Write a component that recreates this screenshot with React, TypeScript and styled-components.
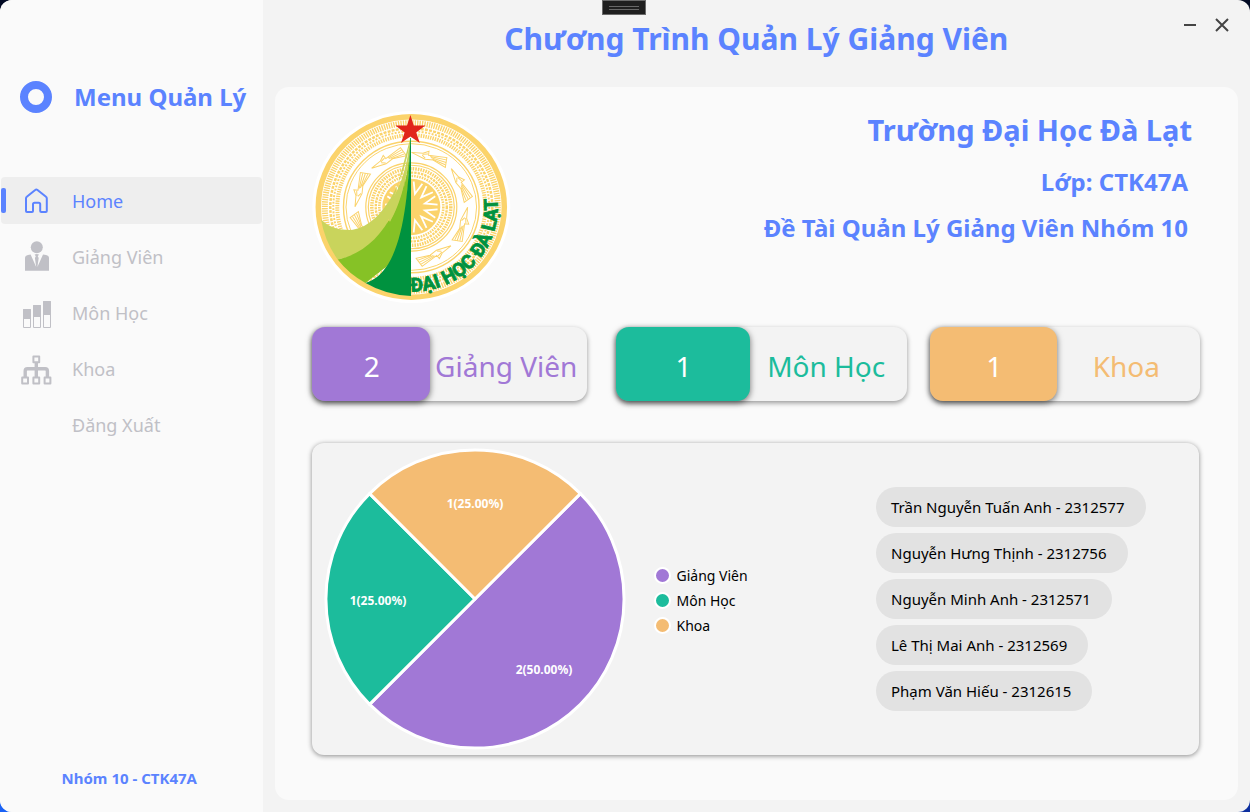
import React from "react";
import styled, { createGlobalStyle } from "styled-components";

const BLUE = "#5b83ff";
const PURPLE = "#a178d6";
const TEAL = "#1cbc9c";
const ORANGE = "#f4bc73";

const GlobalStyle = createGlobalStyle`
  * { box-sizing: border-box; }
  body {
    margin: 0;
    background:
      linear-gradient(to bottom, #020b24 50%, transparent 90%),
      linear-gradient(to right, #1a62f5, #0c2f9f);
    font-family: "Noto Sans", "Open Sans", sans-serif;
  }
  h1, h2, h3, p, ul { margin: 0; padding: 0; }
  ul { list-style: none; }
`;

const Window = styled.div`
  display: grid;
  grid-template-columns: 21% minmax(0, 1fr);
  min-height: 100vh;
  overflow: hidden;
  border-radius: 12px;
  background: #f3f3f3;
`;

const Sidebar = styled.aside`
  display: flex;
  flex-direction: column;
  background: #fafafa;
`;

const Brand = styled.div`
  display: flex;
  align-items: center;
  gap: 22px;
  height: 177px;
  padding: 17px 0 0 20px;
  color: ${BLUE};
`;

const Ring = styled.span`
  width: 32px;
  height: 32px;
  border: 8px solid ${BLUE};
  border-radius: 50%;
`;

const BrandName = styled.h2`
  font-size: 24px;
  line-height: 32px;
  font-weight: 700;
  white-space: nowrap;
`;

const Nav = styled.nav`
  display: flex;
  flex-direction: column;
  gap: 9px;
  padding: 0 1px;
`;

const NavLink = styled.a<{ $active?: boolean }>`
  position: relative;
  display: flex;
  align-items: center;
  gap: 20px;
  height: 47px;
  padding-left: 19px;
  border-radius: 4px;
  font-size: 18px;
  line-height: 24px;
  text-decoration: none;
  color: ${(p) => (p.$active ? BLUE : "#c0c0c6")};
  background: ${(p) => (p.$active ? "#eeeeee" : "transparent")};
`;

const ActiveMark = styled.span`
  position: absolute;
  left: 0;
  top: 11px;
  width: 5px;
  height: 25px;
  border-radius: 2px;
  background: ${BLUE};
`;

const NavIcon = styled.svg`
  width: 32px;
  height: 32px;
  flex: none;
`;

const Credit = styled.p`
  margin-top: auto;
  padding: 0 4px 23px 0;
  text-align: center;
  font-size: 15px;
  line-height: 22px;
  font-weight: 700;
  color: ${BLUE};
`;

const Main = styled.main`
  position: relative;
  display: flex;
  flex-direction: column;
  padding: 0 12px 12px;
`;

const TitleBar = styled.header`
  height: 87px;
  padding-top: 19px;
  text-align: center;
`;

const Title = styled.h1`
  font-size: 30px;
  line-height: 40px;
  color: ${BLUE};
`;

const Controls = styled.div`
  position: absolute;
  top: 15px;
  right: 18px;
  display: flex;
  gap: 12px;
`;

const ControlButton = styled.button`
  width: 20px;
  height: 20px;
  padding: 0;
  border: 0;
  background: none;
  color: #444;
  svg { display: block; }
`;

const DebugHandle = styled.div`
  position: fixed;
  top: 0;
  left: 50%;
  width: 44px;
  height: 15px;
  margin-left: -23px;
  padding: 5px 6px;
  border: 1px solid #6a6a6a;
  background: #1f1f1f;
  span {
    display: block;
    height: 4px;
    border: solid #686868;
    border-width: 1px 0;
  }
`;

const Panel = styled.section`
  flex: 1;
  padding: 21px 38px 45px 37px;
  border-radius: 14px;
  background: #fafafa;
`;

const Intro = styled.div`
  display: flex;
  justify-content: space-between;
  height: 219px;
`;

const Headings = styled.div`
  display: flex;
  flex-direction: column;
  align-items: flex-end;
  gap: 6px;
  padding: 2px 8px 0 0;
  color: ${BLUE};
`;

const School = styled.h2`
  margin-bottom: 6px;
  font-size: 29px;
  line-height: 40px;
`;

const Subject = styled.h3`
  padding-right: 4px;
  font-size: 24px;
  line-height: 40px;
`;

const Stats = styled.div`
  display: flex;
`;

const StatCard = styled.article<{ $share: number; $gutter: number }>`
  display: flex;
  flex: ${(p) => p.$share} 1 0;
  height: 74px;
  margin-right: ${(p) => p.$gutter}px;
  border-radius: 13px;
  background: #f3f3f3;
  box-shadow: 0 2px 5px rgba(0, 0, 0, 0.4);
  font-size: 28px;
  line-height: 40px;
`;

const StatValue = styled.strong<{ $color: string; $width: number }>`
  display: grid;
  place-items: center;
  flex: 0 0 ${(p) => p.$width}%;
  padding: 4px 0 0 2px;
  border-radius: 13px;
  background: ${(p) => p.$color};
  box-shadow: 0 2px 6px rgba(0, 0, 0, 0.55);
  color: #fff;
  font-weight: 400;
`;

const StatName = styled.span<{ $color: string }>`
  display: grid;
  place-items: center;
  flex: 1;
  padding: 4px 4px 0 0;
  white-space: nowrap;
  color: ${(p) => p.$color};
`;

const ChartCard = styled.section`
  display: flex;
  align-items: center;
  min-height: 312px;
  margin: 42px 1px 0 0;
  padding-left: 12px;
  border-radius: 12px;
  background: #f3f3f3;
  box-shadow: 0 1px 5px rgba(0, 0, 0, 0.45);
`;

const Pie = styled.svg`
  width: 302px;
  height: 302px;
  flex: none;
  text {
    font-size: 12px;
    font-weight: 700;
    fill: #fff;
    text-anchor: middle;
  }
`;

const Legend = styled.ul`
  flex: 1;
  padding: 2px 0 0 28px;
`;

const LegendItem = styled.li`
  display: flex;
  align-items: center;
  gap: 6px;
  font-size: 14px;
  line-height: 25px;
`;

const Dot = styled.span<{ $color: string }>`
  width: 17px;
  height: 17px;
  border: 2px solid #fff;
  border-radius: 50%;
  background: ${(p) => p.$color};
`;

const Members = styled.ul`
  display: flex;
  flex-direction: column;
  align-items: flex-start;
  gap: 6px;
  flex: 0 0 323px;
`;

const Member = styled.li`
  height: 40px;
  padding: 0 21px 0 15px;
  border-radius: 20px;
  background: #e2e2e2;
  font-size: 15px;
  line-height: 41px;
  white-space: nowrap;
`;

const HomeIcon = () => (
  <NavIcon viewBox="0 0 32 32" fill="none" stroke="currentColor" strokeWidth="2" strokeLinejoin="round">
    <path d="M15.2 5Q16.3 4 17.5 5L26 11.8Q26.8 12.4 26.8 13.5V26Q26.8 27 25.8 27H21.3Q20.2 27 20.2 26V19.3Q20.2 17.7 18.7 17.7H14.6Q13 17.7 13 19.3V26Q13 27 12 27H7Q6 27 6 26V13.5Q6 12.4 6.8 11.8Z" />
  </NavIcon>
);

const TeacherIcon = () => (
  <NavIcon viewBox="0 0 32 32" fill="currentColor">
    <circle cx="16.8" cy="6.2" r="6" />
    <path d="M5 29.8V17Q5 14.5 8 14L10.6 13.6L16.2 26L14.9 17L15.8 15.2L14.6 13.6Q16.8 12.4 19 13.6L17.8 15.2L18.7 17L17.4 26L23 13.6L26 14Q29 14.5 29 17V29.8Z" />
  </NavIcon>
);

const CourseIcon = () => (
  <NavIcon viewBox="0 0 32 32" fill="none" stroke="currentColor">
    <path d="M3.5 12.5H10.5V30.5H3.5ZM13.5 8.5H20.5V30.5H13.5ZM23.5 4.5H30.5V30.5H23.5Z" />
    <path fill="currentColor" d="M3.5 12.5H10.5V21.5H3.5ZM13.5 8.5H20.5V19.5H13.5ZM23.5 4.5H30.5V17.5H23.5Z" />
  </NavIcon>
);

const FacultyIcon = () => (
  <NavIcon viewBox="0 0 32 32" fill="none" stroke="currentColor" strokeWidth="2" strokeLinejoin="round">
    <path d="M13.4 3.4H19.2V9.2H13.4ZM2.2 24.6H8V30.4H2.2ZM13.4 24.6H19.2V30.4H13.4ZM24.6 24.6H30.4V30.4H24.6Z" />
    <path strokeWidth="3.4" d="M16.3 9.5V24M5.2 24V18Q5.2 15.8 7.4 15.8H25.2Q27.4 15.8 27.4 18V24" />
  </NavIcon>
);

const navItems = [
  { label: "Home", icon: <HomeIcon />, active: true },
  { label: "Giảng Viên", icon: <TeacherIcon /> },
  { label: "Môn Học", icon: <CourseIcon /> },
  { label: "Khoa", icon: <FacultyIcon /> },
  { label: "Đăng Xuất", icon: <NavIcon /> },
];

const stats = [
  { label: "Giảng Viên", value: 2, color: PURPLE, share: 276, gutter: 29, width: 43 },
  { label: "Môn Học", value: 1, color: TEAL, share: 292, gutter: 23, width: 46 },
  { label: "Khoa", value: 1, color: ORANGE, share: 271, gutter: 0, width: 47 },
];

const members = [
  "Trần Nguyễn Tuấn Anh - 2312577",
  "Nguyễn Hưng Thịnh - 2312756",
  "Nguyễn Minh Anh - 2312571",
  "Lê Thị Mai Anh - 2312569",
  "Phạm Văn Hiếu - 2312615",
];

const angles = (count: number) => Array.from({ length: count }, (_, i) => (360 / count) * i);

const Crest = styled.svg`
  width: 200px;
  height: 196px;
  flex: none;
`;

const CrestText = styled.text`
  font-family: Roboto, "Liberation Sans", sans-serif;
  font-size: 19px;
  font-weight: 700;
  fill: #00923f;
  stroke: #00923f;
  stroke-width: 0.8px;
`;

const SchoolCrest = () => (
  <Crest viewBox="12 8 200 196" role="img" aria-label="Đại Học Đà Lạt">
    <g transform="translate(111.3 107) scale(1 0.97)" fill="none" stroke="#fbd36b">
      <circle r="99" fill="#fff" stroke="none" />
      <circle r="93" strokeWidth="5.5" />
      <circle r="86.5" strokeWidth="6" strokeDasharray="1.4 1" />
      <circle r="81" strokeWidth="2.5" strokeDasharray="3 1.2" />
      <circle r="78" strokeWidth="2" strokeDasharray="2 1.4" />
      <circle r="74" strokeWidth="4" strokeDasharray="1.4 1" />
      <circle r="67.8" strokeWidth="1.4" />
      <circle r="65.3" strokeWidth="1" />
      {angles(8).map((a) => (
        <g key={a} transform={`rotate(${a + 20})`} strokeWidth="1">
          <path d="M-19-53L-8-56L-3-60L-2-56L16-60L18-50L4-53L-4-51Z" />
          <path d="M0-55.500L16-57.500M1-54.500L17-55M3-53.500L17-52.500M-8-55L-3-57M-8-54L-4-52" />
        </g>
      ))}
      <circle r="45.5" strokeWidth="1.2" />
      <circle r="43" strokeWidth="1.2" />
      <circle r="39.5" strokeWidth="3.5" strokeDasharray="1.6 1" />
      <circle r="35.5" strokeWidth="2.4" strokeDasharray="2.4 1" />
      <circle r="32" strokeWidth="2.6" strokeDasharray="1.6 1" />
      <circle r="29" fill="#fbd36b" stroke="none" />
      {angles(12).map((a) => (
        <path key={a} transform={`rotate(${a + 15})`} stroke="#fff" strokeWidth="1.8" d="M-4.500-26L0-14L4.500-26" />
      ))}
    </g>
    <path fill="#c9d45c" d="M110.4 38C106 77 83 128 50 130C38 130 28 127 21 119.5Q25 142 37.7 159.5L80 150Z" />
    <path fill="#86c226" d="M110.4 38C107.5 100 83 150 37.7 159.5Q49 174 65.5 183L95 160Z" />
    <path fill="#c9d45c" d="M110.4 38C106 77 96 96 84 112L90 122C100 104 108 80 110.4 38Z" />
    <path fill="#86c226" d="M110.4 38C108.500 80 100 108 88 126L95 160C105 130 109 90 110.4 38Z" />
    <path fill="#00923f" d="M110.3 38C108.3 110 100 173 65.5 183Q86 195 111 196V38Z" />
    <path fill="#e1251b" d="M110.4 15L113.8 25.6H125.4L116.2 32.4L119.8 43L110.4 36.5L101 43L104.6 32.4L95.4 25.6H107Z" />
    <path id="crest-arc" fill="none" d="M111 191.500A85.500 84.500 0 0 0 195.500 88" />
    <CrestText>
      <textPath href="#crest-arc">ĐẠI HỌC ĐÀ LẠT</textPath>
    </CrestText>
  </Crest>
);

export default function App() {
  return (
    <Window>
      <GlobalStyle />
      <Sidebar>
        <Brand>
          <Ring />
          <BrandName>Menu Quản Lý</BrandName>
        </Brand>
        <Nav>
          {navItems.map((item) => (
            <NavLink key={item.label} href="#" $active={item.active}>
              {item.active && <ActiveMark />}
              {item.icon}
              {item.label}
            </NavLink>
          ))}
        </Nav>
        <Credit>Nhóm 10 - CTK47A</Credit>
      </Sidebar>
      <Main>
        <TitleBar>
          <Title>Chương Trình Quản Lý Giảng Viên</Title>
        </TitleBar>
        <Controls>
          <ControlButton aria-label="Minimize">
            <svg width="20" height="20" fill="none" stroke="currentColor" strokeWidth="2">
              <path d="M4 10H16" />
            </svg>
          </ControlButton>
          <ControlButton aria-label="Close">
            <svg width="20" height="20" fill="none" stroke="currentColor" strokeWidth="2">
              <path d="M4 4L16 16M16 4L4 16" />
            </svg>
          </ControlButton>
        </Controls>
        <Panel>
          <Intro>
            <SchoolCrest />
            <Headings>
              <School>Trường Đại Học Đà Lạt</School>
              <Subject>Lớp: CTK47A</Subject>
              <Subject>Đề Tài Quản Lý Giảng Viên Nhóm 10</Subject>
            </Headings>
          </Intro>
          <Stats>
            {stats.map((s) => (
              <StatCard key={s.label} $share={s.share} $gutter={s.gutter}>
                <StatValue $color={s.color} $width={s.width}>{s.value}</StatValue>
                <StatName $color={s.color}>{s.label}</StatName>
              </StatCard>
            ))}
          </Stats>
          <ChartCard>
            <Pie viewBox="-151 -151 302 302" role="img" aria-label="Tỉ lệ">
              <g stroke="#fff" strokeWidth="3" strokeLinejoin="round">
                <path fill={PURPLE} d="M0 0L105.4-105.4A149 149 0 0 1-105.4 105.4Z" />
                <path fill={TEAL} d="M0 0L-105.4 105.4A149 149 0 0 1-105.4-105.4Z" />
                <path fill={ORANGE} d="M0 0L-105.4-105.4A149 149 0 0 1 105.4-105.4Z" />
              </g>
              <text x="0" y="-91">1(25.00%)</text>
              <text x="-97" y="6">1(25.00%)</text>
              <text x="69" y="75">2(50.00%)</text>
            </Pie>
            <Legend>
              {stats.map((s) => (
                <LegendItem key={s.label}>
                  <Dot $color={s.color} />
                  {s.label}
                </LegendItem>
              ))}
            </Legend>
            <Members>
              {members.map((m) => (
                <Member key={m}>{m}</Member>
              ))}
            </Members>
          </ChartCard>
        </Panel>
      </Main>
      <DebugHandle>
        <span />
      </DebugHandle>
    </Window>
  );
}
